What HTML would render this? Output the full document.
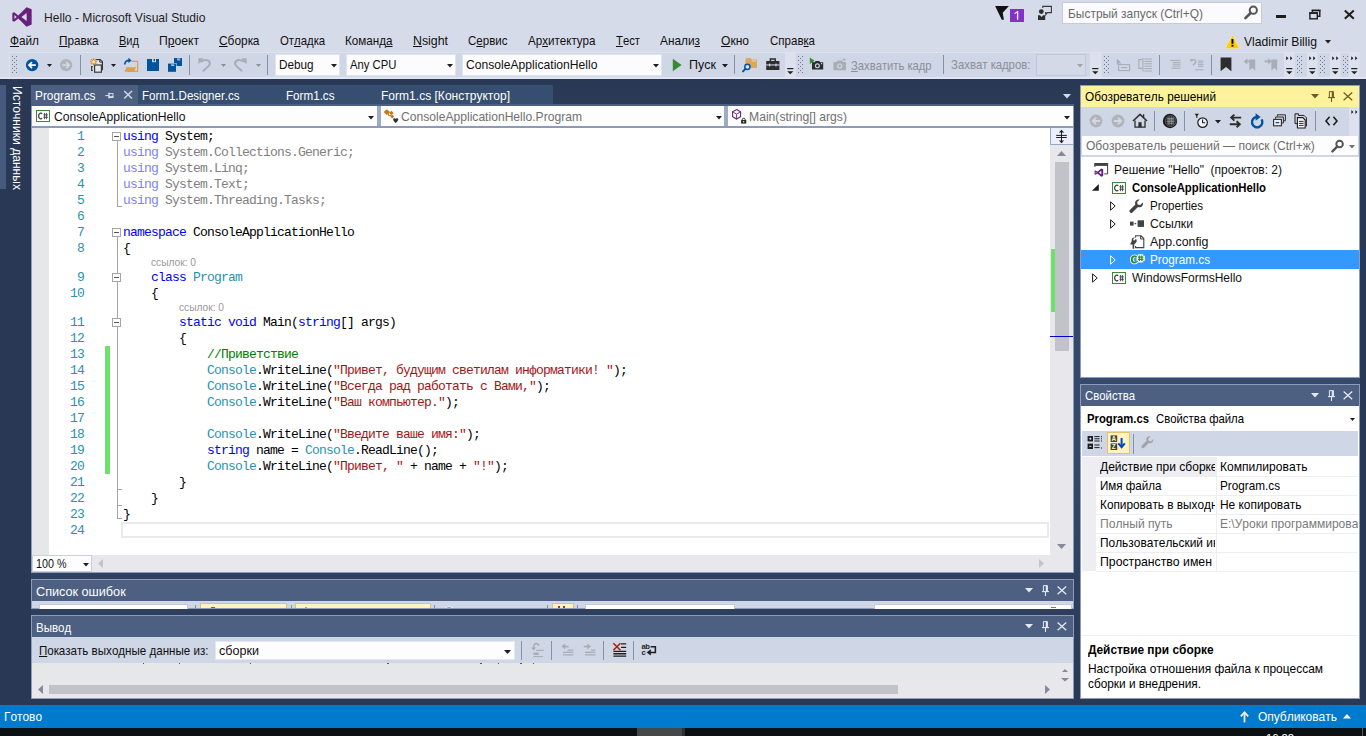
<!DOCTYPE html>
<html><head><meta charset="utf-8">
<style>
*{box-sizing:border-box;margin:0;padding:0}
html,body{width:1366px;height:736px;overflow:hidden;background:#293955}
body{font-family:"Liberation Sans",sans-serif;font-size:12px;color:#1e1e1e}
#root{position:relative;width:1366px;height:736px;overflow:hidden;background:#293955}
.a{position:absolute}
.t{position:absolute;white-space:nowrap;transform-origin:0 50%;font-kerning:none}
.b{font-weight:bold}
.m{font-family:"Liberation Mono",monospace}
u{text-decoration:underline;text-underline-offset:0.5px;text-decoration-thickness:1px}
svg{position:absolute;overflow:visible}
.cl{position:absolute;white-space:pre;font-family:"Liberation Mono",monospace;font-size:13px;letter-spacing:-0.8px;line-height:16px;height:16px;left:123px;color:#000;font-kerning:none}
.ln{position:absolute;white-space:pre;font-family:"Liberation Mono",monospace;font-size:13px;letter-spacing:-0.8px;line-height:16px;height:16px;left:49px;width:35px;text-align:right;color:#2b91af}
.k{color:#0000ff}.y{color:#2b91af}.s{color:#a31515}.c{color:#008000}
.d{color:#808080}.dk{color:#8080ff}
</style></head><body>
<div id="root">
<div class="a" style="left:0px;top:0px;width:1366px;height:79px;background:#d6dbe9;"></div>
<div class="a" style="left:0px;top:77px;width:1366px;height:2px;background:#e1e5f1;"></div>
<svg style="left:12px;top:7px;" width="20" height="20" viewBox="0 0 23.6 23.6"><path fill="#68217a" d="M17.2 0.3 L23.2 2.8 V20.6 L17.2 23.2 L7.4 13.6 L2.6 17.4 L0.4 16.3 V7.2 L2.6 6.1 L7.4 9.9 Z M17.3 7.1 L11.1 11.75 L17.3 16.4 Z M2.9 9.3 V14.2 L5.5 11.75 Z"/></svg>
<span class="t" style="left:44px;top:10.2px;height:16px;line-height:16px;font-size:13.5px;color:#1e1e1e;transform:scaleX(0.8968);">Hello - Microsoft Visual Studio</span>
<svg style="left:995px;top:6px;" width="14" height="14" viewBox="0 0 14 14"><path fill="#111" d="M0.1 0H13.9L7.7 6.7L8.9 13.8H6.8Z"/></svg>
<div class="a" style="left:1010px;top:9px;width:14px;height:13px;background:#8331c7;"></div>
<svg style="left:1014px;top:11px;" width="5" height="9" viewBox="0 0 5 9"><path d="M3.6 0.2V8.8" stroke="#fff" stroke-width="1.3"/><path d="M0.6 2.6L3.4 0.6" stroke="#fff" stroke-width="1.1"/></svg>
<svg style="left:1037px;top:5px;" width="16" height="16" viewBox="0 0 16 16"><path fill="none" stroke="#3a3a3a" stroke-width="1.1" d="M5.8 3V1.4H14.4V7.6H10.4L8.8 9.6V7.6H8"/><circle cx="4.3" cy="6.6" r="2.4" fill="#2d2d2d"/><path fill="#2d2d2d" d="M1 10.2H3L4.6 12L6.2 10.2H8.2V15H1Z"/></svg>
<div class="a" style="left:1062px;top:2px;width:200px;height:22px;background:#fbfbfd;border:1px solid #c5cbdb;"></div>
<span class="t" style="left:1068px;top:6.1px;height:16px;line-height:16px;font-size:13px;color:#6a6a6a;transform:scaleX(0.9191);">Быстрый запуск (Ctrl+Q)</span>
<svg style="left:1244px;top:5px;" width="15" height="15" viewBox="0 0 15 15"><circle cx="9.3" cy="5.2" r="3.6" fill="none" stroke="#555" stroke-width="2"/><path d="M6.6 8 L1.4 13.2" stroke="#555" stroke-width="2.6" stroke-linecap="round"/></svg>
<div class="a" style="left:1276px;top:15px;width:10px;height:3px;background:#1e1e1e;"></div>
<svg style="left:1309px;top:9px;" width="12" height="11" viewBox="0 0 12 11"><path fill="none" stroke="#1e1e1e" stroke-width="1.4" d="M3.4 3V1.4h7.4v5.8h-2.2"/><rect x="0.9" y="4" width="7.4" height="5.8" fill="none" stroke="#1e1e1e" stroke-width="1.4"/><rect x="0.2" y="3.3" width="8.8" height="1.6" fill="#1e1e1e"/><rect x="2.7" y="0.7" width="8.8" height="1.6" fill="#1e1e1e"/></svg>
<svg style="left:1344px;top:10px;" width="11" height="9" viewBox="0 0 11 9"><path d="M0.8 0.4L9.8 8.8M9.8 0.4L0.8 8.8" stroke="#1e1e1e" stroke-width="2"/></svg>
<span class="t" style="left:10px;top:32.8px;height:16px;line-height:16px;font-size:13px;color:#111;transform:scaleX(0.9071);"><u>Ф</u>айл</span>
<span class="t" style="left:59px;top:32.8px;height:16px;line-height:16px;font-size:13px;color:#111;transform:scaleX(0.9051);"><u>П</u>равка</span>
<span class="t" style="left:119px;top:32.8px;height:16px;line-height:16px;font-size:13px;color:#111;transform:scaleX(0.8499);"><u>В</u>ид</span>
<span class="t" style="left:159px;top:32.8px;height:16px;line-height:16px;font-size:13px;color:#111;transform:scaleX(0.9370);">П<u>р</u>оект</span>
<span class="t" style="left:219px;top:32.8px;height:16px;line-height:16px;font-size:13px;color:#111;transform:scaleX(0.9159);"><u>С</u>борка</span>
<span class="t" style="left:280px;top:32.8px;height:16px;line-height:16px;font-size:13px;color:#111;transform:scaleX(0.8754);">От<u>л</u>адка</span>
<span class="t" style="left:345px;top:32.8px;height:16px;line-height:16px;font-size:13px;color:#111;transform:scaleX(0.8965);">Команд<u>а</u></span>
<span class="t" style="left:413px;top:32.8px;height:16px;line-height:16px;font-size:13px;color:#111;transform:scaleX(0.9496);"><u>N</u>sight</span>
<span class="t" style="left:468px;top:32.8px;height:16px;line-height:16px;font-size:13px;color:#111;transform:scaleX(0.8870);">С<u>е</u>рвис</span>
<span class="t" style="left:528px;top:32.8px;height:16px;line-height:16px;font-size:13px;color:#111;transform:scaleX(0.8944);">Ар<u>х</u>итектура</span>
<span class="t" style="left:616px;top:32.8px;height:16px;line-height:16px;font-size:13px;color:#111;transform:scaleX(0.8683);"><u>Т</u>ест</span>
<span class="t" style="left:660px;top:32.8px;height:16px;line-height:16px;font-size:13px;color:#111;transform:scaleX(0.9110);">Анали<u>з</u></span>
<span class="t" style="left:720.5px;top:32.8px;height:16px;line-height:16px;font-size:13px;color:#111;transform:scaleX(0.9261);"><u>О</u>кно</span>
<span class="t" style="left:769.5px;top:32.8px;height:16px;line-height:16px;font-size:13px;color:#111;transform:scaleX(0.8872);">Справ<u>к</u>а</span>
<svg style="left:1224.6px;top:34px;" width="15" height="15" viewBox="0 0 15 15"><path d="M7.4 0.8L14.4 14.6H0.4Z" fill="#ffcc00" stroke="#f7e9a8" stroke-width="0.7" stroke-linejoin="round"/><rect x="6.5" y="5" width="1.9" height="4.8" fill="#000"/><rect x="6.5" y="10.8" width="1.9" height="1.8" fill="#000"/></svg>
<span class="t" style="left:1244px;top:34px;height:16px;line-height:16px;font-size:13px;color:#111;transform:scaleX(0.9355);">Vladimir Billig</span>
<svg style="left:1325px;top:40px;" width="6" height="3.5" viewBox="0 0 6 3.5"><path d="M0 0H6L3.0 3.5Z" fill="#1e1e1e"/></svg>
<div class="a" style="left:9px;top:52px;width:787px;height:25px;background:#cfd6e5;border-left:1px solid #dde2ef;border-top:1px solid #dde2ef;"></div>
<div class="a" style="left:796px;top:52px;width:305px;height:25px;background:#cfd6e5;border-top:1px solid #dde2ef;"></div>
<div class="a" style="left:1102px;top:52px;width:193px;height:25px;background:#cfd6e5;border-top:1px solid #dde2ef;"></div>
<div class="a" style="left:1295px;top:52px;width:23px;height:25px;background:#cfd6e5;border-top:1px solid #dde2ef;"></div>
<div class="a" style="left:1318px;top:52px;width:23px;height:25px;background:#cfd6e5;border-top:1px solid #dde2ef;"></div>
<div class="a" style="left:1341px;top:52px;width:19px;height:25px;background:#cfd6e5;border-top:1px solid #dde2ef;"></div>
<svg style="left:12px;top:56px;" width="5" height="18" viewBox="0 0 5 18"><g fill="#6d7890"><rect x="0" y="0" width="1" height="1"/><rect x="4" y="0" width="1" height="1"/><rect x="2" y="2" width="1" height="1"/><rect x="0" y="4" width="1" height="1"/><rect x="4" y="4" width="1" height="1"/><rect x="2" y="6" width="1" height="1"/><rect x="0" y="8" width="1" height="1"/><rect x="4" y="8" width="1" height="1"/><rect x="2" y="10" width="1" height="1"/><rect x="0" y="12" width="1" height="1"/><rect x="4" y="12" width="1" height="1"/><rect x="2" y="14" width="1" height="1"/><rect x="0" y="16" width="1" height="1"/><rect x="4" y="16" width="1" height="1"/></g></svg>
<svg style="left:25px;top:58px;" width="14" height="14" viewBox="0 0 14 14"><circle cx="7.1" cy="7.1" r="6.2" fill="#00539c"/><path d="M10.8 7.1H4.4M7 4.1L4 7.1L7 10.1" fill="none" stroke="#fff" stroke-width="1.7"/></svg>
<svg style="left:46.5px;top:64px;" width="5" height="3.0" viewBox="0 0 5 3.0"><path d="M0 0H5L2.5 3.0Z" fill="#1e1e1e"/></svg>
<svg style="left:59px;top:58px;" width="14" height="14" viewBox="0 0 14 14"><circle cx="7.1" cy="7.1" r="6.2" fill="#b1b4bb"/><path d="M3.4 7.1H9.8M7.2 4.1L10.2 7.1L7.2 10.1" fill="none" stroke="#d4d8e2" stroke-width="1.7"/></svg>
<div class="a" style="left:80px;top:55px;width:1px;height:20px;background:#8591ab;"></div>
<svg style="left:90px;top:58px;" width="13" height="15" viewBox="0 0 13 15"><path d="M5.6 1.6H10.2L12.4 3.8V11.6H11" fill="#e8eaf2" stroke="#3a3a3a" stroke-width="1.2"/><path d="M9.8 1.6V4.2H12.4" fill="none" stroke="#3a3a3a" stroke-width="1"/><rect x="4.6" y="7" width="6.8" height="7.2" fill="#e8eaf2" stroke="#3a3a3a" stroke-width="1.2"/><path d="M2.8 8.6H1.6V12.4H2.8" fill="none" stroke="#3a3a3a" stroke-width="1.1"/><g stroke="#d98a1f" stroke-width="1.1"><path d="M3.6 0.2V7.2M0.1 3.7H7.1M1.1 1.2L6.1 6.2M6.1 1.2L1.1 6.2"/></g><circle cx="3.6" cy="3.7" r="1.5" fill="#fbe2b4"/></svg>
<svg style="left:111px;top:64px;" width="5" height="3.0" viewBox="0 0 5 3.0"><path d="M0 0H5L2.5 3.0Z" fill="#1e1e1e"/></svg>
<svg style="left:124px;top:58px;" width="15" height="15" viewBox="0 0 15 15"><path d="M7.4 3.4H13.6V13.4H4" fill="none" stroke="#dca04c" stroke-width="1.2"/><path d="M0.4 13.8L2.6 9.2H12.2L10 13.8Z" fill="#dca04c"/><path d="M0.8 6.6C0.8 3.6 2.6 2.4 5.2 2.4" fill="none" stroke="#00539c" stroke-width="1.7"/><path d="M4.4 -0.2L7.6 2.4L4.4 5Z" fill="#00539c"/></svg>
<svg style="left:147px;top:59px;" width="12" height="12" viewBox="0 0 12 12"><path d="M0 0H12V12H0Z" fill="#00539c"/><rect x="5" y="0" width="4" height="3.2" fill="#cfd6e5"/><rect x="6.6" y="0" width="1.4" height="2.2" fill="#00539c"/></svg>
<svg style="left:167px;top:58px;" width="16" height="14" viewBox="0 0 16 14"><path d="M7 0H15V8H7Z" fill="#00539c"/><rect x="10.4" y="0" width="2.8" height="2.4" fill="#cfd6e5"/><rect x="11.6" y="0" width="1" height="1.6" fill="#00539c"/><path d="M0.4 5H9.6V14.4H0.4Z" fill="#cfd6e5"/><path d="M1 5.6H9V13.8H1Z" fill="#00539c"/><rect x="4.4" y="5.6" width="2.8" height="2.4" fill="#cfd6e5"/><rect x="5.6" y="5.6" width="1" height="1.6" fill="#00539c"/></svg>
<div class="a" style="left:189px;top:55px;width:1px;height:20px;background:#8591ab;"></div>
<svg style="left:198px;top:58px;" width="14" height="14" viewBox="0 0 14 14"><path d="M2.6 3.6C8 0.4 12.4 2.2 11.8 6C11.4 8.4 8 10 5 13.4" fill="none" stroke="#a9adb6" stroke-width="2"/><path d="M0.4 0.2H5.4L3.4 3.4L0.4 6Z" fill="#a9adb6"/></svg>
<svg style="left:220.5px;top:64px;" width="5" height="3.0" viewBox="0 0 5 3.0"><path d="M0 0H5L2.5 3.0Z" fill="#8e9096"/></svg>
<svg style="left:233px;top:58px;" width="14" height="14" viewBox="0 0 14 14"><path d="M11.4 3.6C6 0.4 1.6 2.2 2.2 6C2.6 8.4 6 10 9 13.4" fill="none" stroke="#a9adb6" stroke-width="2"/><path d="M13.6 0.2H8.6L10.6 3.4L13.6 6Z" fill="#a9adb6"/></svg>
<svg style="left:255.5px;top:64px;" width="5" height="3.0" viewBox="0 0 5 3.0"><path d="M0 0H5L2.5 3.0Z" fill="#8e9096"/></svg>
<div class="a" style="left:267px;top:55px;width:1px;height:20px;background:#8591ab;"></div>
<div class="a" style="left:275px;top:54px;width:65px;height:22px;background:#fcfcfc;border:1px solid #e0e5f0;"></div><svg style="left:330.5px;top:63.5px;" width="6" height="3.5" viewBox="0 0 6 3.5"><path d="M0 0H6L3.0 3.5Z" fill="#1e1e1e"/></svg>
<span class="t" style="left:279px;top:57px;height:16px;line-height:16px;font-size:13px;color:#111;transform:scaleX(0.9005);">Debug</span>
<div class="a" style="left:346px;top:54px;width:110px;height:22px;background:#fcfcfc;border:1px solid #e0e5f0;"></div><svg style="left:446.5px;top:63.5px;" width="6" height="3.5" viewBox="0 0 6 3.5"><path d="M0 0H6L3.0 3.5Z" fill="#1e1e1e"/></svg>
<span class="t" style="left:350px;top:57px;height:16px;line-height:16px;font-size:13px;color:#111;transform:scaleX(0.8697);">Any CPU</span>
<div class="a" style="left:462px;top:54px;width:200px;height:22px;background:#fcfcfc;border:1px solid #e0e5f0;"></div><svg style="left:652.5px;top:63.5px;" width="6" height="3.5" viewBox="0 0 6 3.5"><path d="M0 0H6L3.0 3.5Z" fill="#1e1e1e"/></svg>
<span class="t" style="left:465.5px;top:57px;height:16px;line-height:16px;font-size:13px;color:#111;transform:scaleX(0.9331);">ConsoleApplicationHello</span>
<svg style="left:672px;top:58px;" width="11" height="14" viewBox="0 0 11 14"><path d="M0.8 0.8L9.6 7L0.8 13.2Z" fill="#388a34"/></svg>
<span class="t" style="left:689px;top:57px;height:16px;line-height:16px;font-size:13px;color:#111;transform:scaleX(0.9632);">Пуск</span>
<svg style="left:721.5px;top:64px;" width="6" height="3.5" viewBox="0 0 6 3.5"><path d="M0 0H6L3.0 3.5Z" fill="#1e1e1e"/></svg>
<div class="a" style="left:734px;top:55px;width:1px;height:19px;background:#8591ab;"></div>
<svg style="left:742px;top:56px;" width="17" height="17" viewBox="0 0 17 17"><path d="M3.4 3.4L4.6 2H8.4L9.6 3.4H15V12H3.4Z" fill="#dca85c"/><rect x="9.8" y="4.4" width="4.2" height="1" fill="#f3dcb4"/><circle cx="5.4" cy="10.8" r="2.6" fill="#dfe4f0" stroke="#00539c" stroke-width="1.5"/><path d="M3.4 12.8L1 15.4" stroke="#00539c" stroke-width="1.9" stroke-linecap="round"/></svg>
<svg style="left:766px;top:58px;" width="14" height="13" viewBox="0 0 14 13"><path d="M4.4 3V1H9.2V3" fill="none" stroke="#2d2d2d" stroke-width="1.5"/><rect x="0.2" y="3" width="13.2" height="9" fill="#2d2d2d"/><rect x="0.2" y="6.4" width="13.2" height="1.1" fill="#cfd6e5"/><rect x="3" y="5.6" width="1.2" height="2.8" fill="#cfd6e5"/><rect x="9.4" y="5.6" width="1.2" height="2.8" fill="#cfd6e5"/></svg>
<svg style="left:784.5px;top:53px;" width="10" height="24" viewBox="0 0 10 24"><rect x="0" y="0" width="10.6" height="24" fill="#dde1ee"/><rect x="2.2" y="15" width="6.2" height="1.2" fill="#1e1e1e"/><path d="M2.2 18.2h6.2l-3.1 3z" fill="#1e1e1e"/></svg>
<svg style="left:798px;top:56px;" width="5" height="18" viewBox="0 0 5 18"><g fill="#6d7890"><rect x="0" y="0" width="1" height="1"/><rect x="4" y="0" width="1" height="1"/><rect x="2" y="2" width="1" height="1"/><rect x="0" y="4" width="1" height="1"/><rect x="4" y="4" width="1" height="1"/><rect x="2" y="6" width="1" height="1"/><rect x="0" y="8" width="1" height="1"/><rect x="4" y="8" width="1" height="1"/><rect x="2" y="10" width="1" height="1"/><rect x="0" y="12" width="1" height="1"/><rect x="4" y="12" width="1" height="1"/><rect x="2" y="14" width="1" height="1"/><rect x="0" y="16" width="1" height="1"/><rect x="4" y="16" width="1" height="1"/></g></svg>
<svg style="left:807px;top:57px;" width="17" height="15" viewBox="0 0 17 15"><path d="M2.8 0.6L7.6 3.8L2.8 7Z" fill="#388a34"/><path d="M5 5.2H7.6L8.6 4H12.2L13.2 5.2H16.2V12.6H5Z" fill="#2d2d2d"/><circle cx="10.4" cy="8.8" r="2.5" fill="#cfd6e5"/><circle cx="10.4" cy="8.8" r="1.4" fill="#2d2d2d"/><rect x="14" y="6" width="1.2" height="1.2" fill="#cfd6e5"/></svg>
<svg style="left:833px;top:58px;" width="15" height="14" viewBox="0 0 15 14"><path d="M0.4 4H3.4L4.6 2.4H9L10.2 4H13V12.2H0.4Z" fill="#a9adb6"/><circle cx="6.7" cy="8" r="2.6" fill="#cfd6e5"/><circle cx="6.7" cy="8" r="1.4" fill="#a9adb6"/><path d="M11 0.2V3M9.6 1.6H12.6" stroke="#a9adb6" stroke-width="0.9"/></svg>
<span class="t" style="left:851px;top:57.5px;height:16px;line-height:16px;font-size:13px;color:#8b8f98;transform:scaleX(0.8654);"><u>З</u>ахватить кадр</span>
<div class="a" style="left:943px;top:55px;width:1px;height:19px;background:#8591ab;"></div>
<span class="t" style="left:951px;top:57px;height:16px;line-height:16px;font-size:13px;color:#8b8f98;transform:scaleX(0.8757);">Захват ка<u>д</u>ров:</span>
<div class="a" style="left:1036px;top:54px;width:50px;height:22px;background:#d3d9e7;border:1px solid #c0c8db;"></div><svg style="left:1076.5px;top:63.5px;" width="6" height="3.5" viewBox="0 0 6 3.5"><path d="M0 0H6L3.0 3.5Z" fill="#a2a4a5"/></svg>
<svg style="left:1090.4px;top:53px;" width="10" height="24" viewBox="0 0 10 24"><rect x="0" y="0" width="11.6" height="24" fill="#dde1ee"/><rect x="2.2" y="15" width="6.2" height="1.2" fill="#1e1e1e"/><path d="M2.2 18.2h6.2l-3.1 3z" fill="#1e1e1e"/></svg>
<svg style="left:1104px;top:56px;" width="5" height="18" viewBox="0 0 5 18"><g fill="#6d7890"><rect x="0" y="0" width="1" height="1"/><rect x="4" y="0" width="1" height="1"/><rect x="2" y="2" width="1" height="1"/><rect x="0" y="4" width="1" height="1"/><rect x="4" y="4" width="1" height="1"/><rect x="2" y="6" width="1" height="1"/><rect x="0" y="8" width="1" height="1"/><rect x="4" y="8" width="1" height="1"/><rect x="2" y="10" width="1" height="1"/><rect x="0" y="12" width="1" height="1"/><rect x="4" y="12" width="1" height="1"/><rect x="2" y="14" width="1" height="1"/><rect x="0" y="16" width="1" height="1"/><rect x="4" y="16" width="1" height="1"/></g></svg>
<svg style="left:1116px;top:58px;" width="15" height="14" viewBox="0 0 15 14"><path d="M0.8 0.4V7L2.6 5.4H5.6Z" fill="#a9adb6"/><rect x="2.6" y="6.6" width="11" height="6" fill="none" stroke="#a9adb6" stroke-width="1.1"/><path d="M5 9.6H11.4" stroke="#a9adb6" stroke-width="1.1"/></svg>
<svg style="left:1138px;top:57px;" width="15" height="16" viewBox="0 0 15 16"><path d="M4 2.6H0.9V11.4H4" fill="none" stroke="#a9adb6" stroke-width="1.1"/><path d="M4.9 1V14.6" stroke="#a9adb6" stroke-width="1.1"/><path d="M6.4 2H14M6.4 4.4H14M6.4 6.8H14M6.4 9.2H14M6.4 11.6H14M6.4 14H14" stroke="#a9adb6" stroke-width="1"/></svg>
<div class="a" style="left:1159px;top:55px;width:1px;height:20px;background:#8591ab;"></div>
<svg style="left:1169px;top:59px;" width="13" height="12" viewBox="0 0 13 12"><path d="M1 1.4H11.4M3.6 3.4H11.4M3.6 5.2H11.4M3.6 7H11.4M2.8 9.2H11.4" stroke="#a9adb6" stroke-width="1"/></svg>
<svg style="left:1190px;top:58px;" width="15" height="14" viewBox="0 0 15 14"><path d="M1.4 3.4C2.6 0.6 6.4 1.4 5.6 4.2C5.2 5.6 4 6 3 7.4" fill="none" stroke="#a9adb6" stroke-width="1.4"/><path d="M0.2 0.8L3.2 1.4L0.6 4Z" fill="#a9adb6"/><path d="M8 3H13.4M8 4.8H13.4M8 6.6H13.4M8 8.4H13.4M5 11.8H13.4" stroke="#a9adb6" stroke-width="1"/></svg>
<div class="a" style="left:1211px;top:55px;width:1px;height:20px;background:#8591ab;"></div>
<svg style="left:1220px;top:57px;" width="12" height="15" viewBox="0 0 12 15"><path d="M0.6 0.6H11.4V14.2L6 10L0.6 14.2Z" fill="#2d2d30"/></svg>
<svg style="left:1243px;top:57px;" width="13" height="15" viewBox="0 0 13 15"><path d="M6.4 2.4H12.2V13.6L9.3 11L6.4 13.6Z" fill="#a9adb6"/><path d="M8 4.4H2.4" stroke="#a9adb6" stroke-width="1.9"/><path d="M4.4 1.2V7.6L0.6 4.4Z" fill="#a9adb6"/></svg>
<svg style="left:1264px;top:57px;" width="14" height="15" viewBox="0 0 14 15"><path d="M7.4 2.4H13.2V13.6L10.3 11L7.4 13.6Z" fill="#a9adb6"/><path d="M0.6 4.4H5" stroke="#a9adb6" stroke-width="1.9"/><path d="M4.2 1.2V7.6L8 4.4Z" fill="#a9adb6"/></svg>
<svg style="left:1284px;top:53px;" width="10" height="24" viewBox="0 0 10 24"><rect x="0" y="0" width="10.6" height="24" fill="#dde1ee"/><path d="M2.2 3.2V7.2L4.4 5.2Z M6.2 3.2V7.2L8.4 5.2Z" fill="#1e1e1e"/><rect x="2.2" y="15" width="6.2" height="1.2" fill="#1e1e1e"/><path d="M2.2 18.2h6.2l-3.1 3z" fill="#1e1e1e"/></svg>
<svg style="left:1297px;top:56px;" width="5" height="18" viewBox="0 0 5 18"><g fill="#6d7890"><rect x="0" y="0" width="1" height="1"/><rect x="4" y="0" width="1" height="1"/><rect x="2" y="2" width="1" height="1"/><rect x="0" y="4" width="1" height="1"/><rect x="4" y="4" width="1" height="1"/><rect x="2" y="6" width="1" height="1"/><rect x="0" y="8" width="1" height="1"/><rect x="4" y="8" width="1" height="1"/><rect x="2" y="10" width="1" height="1"/><rect x="0" y="12" width="1" height="1"/><rect x="4" y="12" width="1" height="1"/><rect x="2" y="14" width="1" height="1"/><rect x="0" y="16" width="1" height="1"/><rect x="4" y="16" width="1" height="1"/></g></svg>
<svg style="left:1307px;top:53px;" width="10" height="24" viewBox="0 0 10 24"><rect x="0" y="0" width="10.6" height="24" fill="#dde1ee"/><path d="M2.2 3.2V7.2L4.4 5.2Z M6.2 3.2V7.2L8.4 5.2Z" fill="#1e1e1e"/><rect x="2.2" y="15" width="6.2" height="1.2" fill="#1e1e1e"/><path d="M2.2 18.2h6.2l-3.1 3z" fill="#1e1e1e"/></svg>
<svg style="left:1320px;top:56px;" width="5" height="18" viewBox="0 0 5 18"><g fill="#6d7890"><rect x="0" y="0" width="1" height="1"/><rect x="4" y="0" width="1" height="1"/><rect x="2" y="2" width="1" height="1"/><rect x="0" y="4" width="1" height="1"/><rect x="4" y="4" width="1" height="1"/><rect x="2" y="6" width="1" height="1"/><rect x="0" y="8" width="1" height="1"/><rect x="4" y="8" width="1" height="1"/><rect x="2" y="10" width="1" height="1"/><rect x="0" y="12" width="1" height="1"/><rect x="4" y="12" width="1" height="1"/><rect x="2" y="14" width="1" height="1"/><rect x="0" y="16" width="1" height="1"/><rect x="4" y="16" width="1" height="1"/></g></svg>
<svg style="left:1330px;top:53px;" width="10" height="24" viewBox="0 0 10 24"><rect x="0" y="0" width="10.6" height="24" fill="#dde1ee"/><path d="M2.2 3.2V7.2L4.4 5.2Z M6.2 3.2V7.2L8.4 5.2Z" fill="#1e1e1e"/><rect x="2.2" y="15" width="6.2" height="1.2" fill="#1e1e1e"/><path d="M2.2 18.2h6.2l-3.1 3z" fill="#1e1e1e"/></svg>
<svg style="left:1343px;top:56px;" width="5" height="18" viewBox="0 0 5 18"><g fill="#6d7890"><rect x="0" y="0" width="1" height="1"/><rect x="4" y="0" width="1" height="1"/><rect x="2" y="2" width="1" height="1"/><rect x="0" y="4" width="1" height="1"/><rect x="4" y="4" width="1" height="1"/><rect x="2" y="6" width="1" height="1"/><rect x="0" y="8" width="1" height="1"/><rect x="4" y="8" width="1" height="1"/><rect x="2" y="10" width="1" height="1"/><rect x="0" y="12" width="1" height="1"/><rect x="4" y="12" width="1" height="1"/><rect x="2" y="14" width="1" height="1"/><rect x="0" y="16" width="1" height="1"/><rect x="4" y="16" width="1" height="1"/></g></svg>
<svg style="left:1349px;top:53px;" width="10" height="24" viewBox="0 0 10 24"><rect x="0" y="0" width="10.6" height="24" fill="#dde1ee"/><path d="M2.2 3.2V7.2L4.4 5.2Z M6.2 3.2V7.2L8.4 5.2Z" fill="#1e1e1e"/><rect x="2.2" y="15" width="6.2" height="1.2" fill="#1e1e1e"/><path d="M2.2 18.2h6.2l-3.1 3z" fill="#1e1e1e"/></svg>
<div class="a" style="left:31px;top:79px;width:1329px;height:626px;background:linear-gradient(to bottom,#293955 0%,#35496a 40%,#35496a 60%,#293955 100%);"></div>
<div class="a" style="left:0px;top:85px;width:6px;height:104px;background:#465a7d;"></div>
<span class="t" style="left:17px;top:129.5px;height:16px;line-height:16px;font-size:13px;color:#fff;transform-origin:0 0;transform:rotate(90deg) scale(0.93,1);left:25px;top:85.5px;">Источники данных</span>
<div class="a" style="left:31px;top:85px;width:107px;height:21px;background:#4d6082;"></div>
<div class="a" style="left:138px;top:85px;width:415px;height:19px;background:#364e6f;"></div>
<div class="a" style="left:31px;top:104px;width:1043px;height:2px;background:#4d6082;"></div>
<span class="t" style="left:35px;top:88px;height:16px;line-height:16px;font-size:13px;color:#fff;transform:scaleX(0.9102);">Program.cs</span>
<svg style="left:105px;top:91px;" width="10" height="10" viewBox="0 0 10 10"><g stroke="#dfe3ee"><path d="M0.4 4.6H3.6" stroke-width="1"/><path d="M4 1.6V7.6" stroke-width="1"/><rect x="4" y="2.6" width="4" height="4" fill="none" stroke-width="0.9"/><path d="M4 5.8H8.4" stroke-width="1.3"/></g></svg>
<svg style="left:123px;top:90.4px;" width="10" height="10" viewBox="0 0 10 10"><path d="M1.2 1L9 8.6M9 1L1.2 8.6" stroke="#d3d9e7" stroke-width="1.4"/></svg>
<span class="t" style="left:142px;top:88px;height:16px;line-height:16px;font-size:13px;color:#fff;transform:scaleX(0.8879);">Form1.Designer.cs</span>
<span class="t" style="left:286px;top:88px;height:16px;line-height:16px;font-size:13px;color:#fff;transform:scaleX(0.8953);">Form1.cs</span>
<span class="t" style="left:381px;top:88px;height:16px;line-height:16px;font-size:13px;color:#fff;transform:scaleX(0.9262);">Form1.cs [Конструктор]</span>
<svg style="left:1063px;top:94px;" width="8" height="4.5" viewBox="0 0 8 4.5"><path d="M0 0H8L4.0 4.5Z" fill="#d6dbe9"/></svg>
<div class="a" style="left:31px;top:106px;width:1043px;height:467px;background:#8e9bbc;"></div>
<div class="a" style="left:32px;top:106px;width:1041px;height:22px;background:#8f9bb6;"></div>
<div class="a" style="left:32px;top:106px;width:345px;height:20px;background:#fdfdfd;"></div>
<div class="a" style="left:380.6px;top:106px;width:344px;height:20px;background:#fdfdfd;"></div>
<div class="a" style="left:728px;top:106px;width:344.6px;height:20px;background:#fdfdfd;"></div>
<div class="a" style="left:377px;top:106px;width:3.6px;height:20px;background:#9eabc4;"></div>
<div class="a" style="left:724.4px;top:106px;width:3.6px;height:20px;background:#9eabc4;"></div>
<svg style="left:36px;top:110px;" width="14" height="12" viewBox="0 0 14 12"><rect x="0.5" y="0.5" width="13" height="11" fill="#fff" stroke="#388a34" stroke-width="1"/><path d="M6.2 3.9C5.2 2.6 2.6 3.2 2.6 6C2.6 8.8 5.2 9.4 6.2 8.1" fill="none" stroke="#424242" stroke-width="1.25"/><path d="M8.6 3V9.2M10.6 3V9.2M7.4 4.9H11.8M7.4 7.3H11.8" stroke="#424242" stroke-width="0.95"/></svg>
<span class="t" style="left:53.5px;top:109px;height:16px;line-height:16px;font-size:13px;color:#111;transform:scaleX(0.9331);">ConsoleApplicationHello</span>
<svg style="left:368px;top:115.5px;" width="6" height="3.5" viewBox="0 0 6 3.5"><path d="M0 0H6L3.0 3.5Z" fill="#1e1e1e"/></svg>
<svg style="left:384px;top:109px;" width="15" height="15" viewBox="0 0 15 15"><g fill="#c27d1a"><path d="M2.8 0.2L6.1 3.1L2.8 6L-0.5 3.1Z"/><path d="M7.4 1.8L9.6 4L7.4 6.2L5.2 4Z"/><path d="M8.2 5.6L10.2 7.6L8.2 9.6L6.2 7.6Z"/></g><path d="M4.6 4V6.6H7" fill="none" stroke="#c27d1a" stroke-width="1"/><path d="M9.2 10.4C9.2 8.9 11.4 8.9 11.7 10.1C12 8.9 14.2 8.9 14.2 10.4C14.2 11.8 11.7 13.9 11.7 13.9C11.7 13.9 9.2 11.8 9.2 10.4Z" fill="#2d2d2d"/></svg>
<span class="t" style="left:401px;top:109px;height:16px;line-height:16px;font-size:13px;color:#717171;transform:scaleX(0.9311);">ConsoleApplicationHello.Program</span>
<svg style="left:716px;top:115.5px;" width="6" height="3.5" viewBox="0 0 6 3.5"><path d="M0 0H6L3.0 3.5Z" fill="#1e1e1e"/></svg>
<svg style="left:732px;top:108.6px;" width="15" height="15" viewBox="0 0 15 15"><path d="M4.6 0.6L8.6 2.8V7.7L4.6 10L0.6 7.7V2.8Z" fill="#fff" stroke="#68217a" stroke-width="1.1"/><path d="M0.6 2.8L4.6 5.1L8.6 2.8M4.6 5.1V10" fill="none" stroke="#68217a" stroke-width="0.9"/><rect x="9.1" y="11" width="5.2" height="3.6" fill="#2d2d2d"/><path d="M10.3 11V10.2C10.3 9 13.1 9 13.1 10.2V11" fill="none" stroke="#2d2d2d" stroke-width="1"/><rect x="11.2" y="12" width="1" height="1.4" fill="#fdfdfd"/></svg>
<span class="t" style="left:749px;top:109px;height:16px;line-height:16px;font-size:13px;color:#717171;transform:scaleX(0.9356);">Main(string[] args)</span>
<svg style="left:1063.5px;top:115.5px;" width="6" height="3.5" viewBox="0 0 6 3.5"><path d="M0 0H6L3.0 3.5Z" fill="#1e1e1e"/></svg>
<div class="a" style="left:32px;top:128px;width:1018px;height:427px;background:#fff;"></div>
<div class="a" style="left:32px;top:128px;width:17px;height:427px;background:#e6e7e8;"></div>
<div class="a" style="left:104.6px;top:346px;width:5px;height:128px;background:#6ce26c;"></div>
<div class="a" style="left:121px;top:522px;width:927.5px;height:16px;border:2px solid #eaeaec;"></div>
<div class="a" style="left:117px;top:141px;width:1px;height:66px;background:#a5a5a5;"></div>
<div class="a" style="left:117px;top:206px;width:5px;height:1px;background:#a5a5a5;"></div>
<div class="a" style="left:117px;top:237px;width:1px;height:282px;background:#a5a5a5;"></div>
<div class="a" style="left:117px;top:489px;width:5px;height:1px;background:#a5a5a5;"></div>
<div class="a" style="left:117px;top:505px;width:5px;height:1px;background:#a5a5a5;"></div>
<div class="a" style="left:117px;top:518px;width:5px;height:1px;background:#a5a5a5;"></div>
<svg style="left:112px;top:132px;" width="9" height="9" viewBox="0 0 9 9"><rect x="0.5" y="0.5" width="8" height="8" fill="#fff" stroke="#a5a5a5"/><path d="M2 4.5H7" stroke="#555" stroke-width="1"/></svg>
<svg style="left:112px;top:228px;" width="9" height="9" viewBox="0 0 9 9"><rect x="0.5" y="0.5" width="8" height="8" fill="#fff" stroke="#a5a5a5"/><path d="M2 4.5H7" stroke="#555" stroke-width="1"/></svg>
<svg style="left:112px;top:273px;" width="9" height="9" viewBox="0 0 9 9"><rect x="0.5" y="0.5" width="8" height="8" fill="#fff" stroke="#a5a5a5"/><path d="M2 4.5H7" stroke="#555" stroke-width="1"/></svg>
<svg style="left:112px;top:318px;" width="9" height="9" viewBox="0 0 9 9"><rect x="0.5" y="0.5" width="8" height="8" fill="#fff" stroke="#a5a5a5"/><path d="M2 4.5H7" stroke="#555" stroke-width="1"/></svg>
<div class="ln" style="top:129px">1</div>
<div class="cl" style="top:129px"><span class="k">using</span> System;</div>
<div class="ln" style="top:145px">2</div>
<div class="cl" style="top:145px"><span class="dk">using</span><span class="d"> System.Collections.Generic;</span></div>
<div class="ln" style="top:161px">3</div>
<div class="cl" style="top:161px"><span class="dk">using</span><span class="d"> System.Linq;</span></div>
<div class="ln" style="top:177px">4</div>
<div class="cl" style="top:177px"><span class="dk">using</span><span class="d"> System.Text;</span></div>
<div class="ln" style="top:193px">5</div>
<div class="cl" style="top:193px"><span class="dk">using</span><span class="d"> System.Threading.Tasks;</span></div>
<div class="ln" style="top:209px">6</div>
<div class="ln" style="top:225px">7</div>
<div class="cl" style="top:225px"><span class="k">namespace</span> ConsoleApplicationHello</div>
<div class="ln" style="top:241px">8</div>
<div class="cl" style="top:241px">{</div>
<div class="ln" style="top:270px">9</div>
<div class="cl" style="top:270px">    <span class="k">class</span> <span class="y">Program</span></div>
<div class="ln" style="top:286px">10</div>
<div class="cl" style="top:286px">    {</div>
<div class="ln" style="top:315px">11</div>
<div class="cl" style="top:315px">        <span class="k">static</span> <span class="k">void</span> Main(<span class="k">string</span>[] args)</div>
<div class="ln" style="top:331px">12</div>
<div class="cl" style="top:331px">        {</div>
<div class="ln" style="top:347px">13</div>
<div class="cl" style="top:347px">            <span class="c">//Приветствие</span></div>
<div class="ln" style="top:363px">14</div>
<div class="cl" style="top:363px">            <span class="y">Console</span>.WriteLine(<span class="s">"Привет, будущим светилам информатики! "</span>);</div>
<div class="ln" style="top:379px">15</div>
<div class="cl" style="top:379px">            <span class="y">Console</span>.WriteLine(<span class="s">"Всегда рад работать с Вами,"</span>);</div>
<div class="ln" style="top:395px">16</div>
<div class="cl" style="top:395px">            <span class="y">Console</span>.WriteLine(<span class="s">"Ваш компьютер."</span>);</div>
<div class="ln" style="top:411px">17</div>
<div class="ln" style="top:427px">18</div>
<div class="cl" style="top:427px">            <span class="y">Console</span>.WriteLine(<span class="s">"Введите ваше имя:"</span>);</div>
<div class="ln" style="top:443px">19</div>
<div class="cl" style="top:443px">            <span class="k">string</span> name = <span class="y">Console</span>.ReadLine();</div>
<div class="ln" style="top:459px">20</div>
<div class="cl" style="top:459px">            <span class="y">Console</span>.WriteLine(<span class="s">"Привет, "</span> + name + <span class="s">"!"</span>);</div>
<div class="ln" style="top:475px">21</div>
<div class="cl" style="top:475px">        }</div>
<div class="ln" style="top:491px">22</div>
<div class="cl" style="top:491px">    }</div>
<div class="ln" style="top:507px">23</div>
<div class="cl" style="top:507px">}</div>
<div class="ln" style="top:523px">24</div>
<span class="t" style="left:151px;top:254px;height:16px;line-height:16px;font-size:10.5px;color:#999;transform:scaleX(0.9723);">ссылок: 0</span>
<span class="t" style="left:179px;top:299px;height:16px;line-height:16px;font-size:10.5px;color:#999;transform:scaleX(0.9723);">ссылок: 0</span>
<div class="a" style="left:1050px;top:128px;width:23px;height:427px;background:#e8e8ec;"></div>
<div class="a" style="left:1050px;top:128px;width:23px;height:16.5px;background:#eaeffb;border:1px solid #9aa7c6;border-top:none;border-right:none;"></div>
<svg style="left:1056px;top:130px;" width="11" height="13" viewBox="0 0 11 13"><path d="M5.5 0.6V12.4" stroke="#1e1e1e" stroke-width="1"/><path d="M3.6 2.6L5.5 0.6L7.4 2.6M3.6 10.4L5.5 12.4L7.4 10.4" fill="none" stroke="#1e1e1e" stroke-width="1.1"/><path d="M0.2 5.4H10.8M0.2 7.5H10.8" stroke="#1e1e1e" stroke-width="1"/></svg>
<svg style="left:1057px;top:151px;" width="9" height="5" viewBox="0 0 9 5"><path d="M0 5L4.5 0L9 5Z" fill="#868999"/></svg>
<div class="a" style="left:1054.5px;top:162px;width:14.5px;height:189px;background:#c2c3c9;"></div>
<div class="a" style="left:1050.5px;top:249px;width:4.5px;height:63px;background:#6ce26c;"></div>
<div class="a" style="left:1050px;top:335.5px;width:23px;height:1.6px;background:#0000cd;"></div>
<svg style="left:1057px;top:544px;" width="9" height="5" viewBox="0 0 9 5"><path d="M0 0L4.5 5L9 0Z" fill="#868999"/></svg>
<div class="a" style="left:32px;top:555px;width:1041px;height:17px;background:#e8e8ec;"></div>
<div class="a" style="left:32px;top:555px;width:60px;height:17px;background:#fdfdfd;border:1px solid #c9d0e1;"></div>
<span class="t" style="left:35.5px;top:556px;height:16px;line-height:16px;font-size:13px;color:#111;transform:scaleX(0.8271);">100 %</span>
<svg style="left:82.5px;top:563px;" width="6" height="3.5" viewBox="0 0 6 3.5"><path d="M0 0H6L3.0 3.5Z" fill="#1e1e1e"/></svg>
<svg style="left:98px;top:559px;" width="5" height="9" viewBox="0 0 5 9"><path d="M5 0L0 4.5L5 9Z" fill="#c2c3c9"/></svg>
<svg style="left:1039px;top:559px;" width="5" height="9" viewBox="0 0 5 9"><path d="M0 0L5 4.5L0 9Z" fill="#c2c3c9"/></svg>
<div class="a" style="left:31px;top:579px;width:1043px;height:30px;background:#8e9bbc;"></div>
<div class="a" style="left:32px;top:580px;width:1041px;height:21px;background:#4d6082;"></div>
<span class="t" style="left:35.8px;top:583.5px;height:16px;line-height:16px;font-size:13px;color:#fff;transform:scaleX(0.9748);">Список ошибок</span>
<svg style="left:1025px;top:587.7px;" width="8" height="4.5" viewBox="0 0 8 4.5"><path d="M0 0H8L4.0 4.5Z" fill="#e4e8f2"/></svg><svg style="left:1042px;top:584.5px;" width="7" height="12" viewBox="0 0 7 12"><path d="M1.4 0.6H5.4V6.4" fill="none" stroke="#e4e8f2" stroke-width="1"/><path d="M1.4 0.6V6.4" stroke="#e4e8f2" stroke-width="1"/><path d="M4.6 0.6V6.4" stroke="#e4e8f2" stroke-width="1.7"/><path d="M0 6.6H7" stroke="#e4e8f2" stroke-width="1.1"/><path d="M3.5 7V11" stroke="#e4e8f2" stroke-width="1.1"/></svg><svg style="left:1057px;top:585.9px;" width="10" height="9" viewBox="0 0 10 9"><path d="M0.6 0.6L9.2 8.2M9.2 0.6L0.6 8.2" stroke="#e4e8f2" stroke-width="1.3"/></svg>
<div class="a" style="left:32px;top:601px;width:1041px;height:7px;background:#cfd6e5;"></div>
<div class="a" style="left:39px;top:604px;width:149px;height:4.6px;background:#fff;border:1px solid #c5cce0;border-bottom:none;"></div>
<div class="a" style="left:194.5px;top:605px;width:1px;height:3px;background:#8591ab;"></div>
<div class="a" style="left:200px;top:603.4px;width:87px;height:5px;background:#fdf4bf;border:1px solid #e5c365;border-bottom:none;"></div>
<div class="a" style="left:211px;top:606.6px;width:4px;height:1.4px;background:#d8392b;"></div>
<div class="a" style="left:290.5px;top:605px;width:1px;height:3px;background:#8591ab;"></div>
<div class="a" style="left:295px;top:603.4px;width:136px;height:5px;background:#fdf4bf;border:1px solid #e5c365;border-bottom:none;"></div>
<div class="a" style="left:433.5px;top:605px;width:1px;height:3px;background:#8591ab;"></div>
<svg style="left:443.5px;top:605.6px;overflow:hidden;" width="10" height="2.4" viewBox="0 0 10 2.4"><ellipse cx="5" cy="3.4" rx="4.6" ry="3" fill="#fff"/><ellipse cx="5" cy="3.6" rx="3.6" ry="2.4" fill="#2f8fe0"/></svg>
<div class="a" style="left:305px;top:606.8px;width:2px;height:1.4px;background:#e8a800;"></div>
<div class="a" style="left:547px;top:605px;width:1px;height:3px;background:#8591ab;"></div>
<div class="a" style="left:552px;top:603.4px;width:22px;height:5px;background:#fdf4bf;border:1px solid #e5c365;border-bottom:none;"></div>
<div class="a" style="left:558px;top:606.4px;width:2px;height:1.6px;background:#a33;"></div>
<div class="a" style="left:563px;top:606.4px;width:2px;height:1.6px;background:#a33;"></div>
<div class="a" style="left:577px;top:605px;width:1px;height:3px;background:#8591ab;"></div>
<div class="a" style="left:585px;top:604px;width:150px;height:4.6px;background:#fff;border:1px solid #c5cce0;border-bottom:none;"></div>
<div class="a" style="left:874px;top:604px;width:198px;height:4.6px;background:#fff;border:1px solid #c5cce0;border-bottom:none;"></div>
<div class="a" style="left:1051px;top:607px;width:5px;height:1px;background:#777;"></div>
<div class="a" style="left:31px;top:615px;width:1043px;height:84px;background:#8e9bbc;"></div>
<div class="a" style="left:32px;top:616px;width:1041px;height:21px;background:#4d6082;"></div>
<span class="t" style="left:35.8px;top:619.5px;height:16px;line-height:16px;font-size:13px;color:#fff;transform:scaleX(0.8855);">Вывод</span>
<svg style="left:1025px;top:623.7px;" width="8" height="4.5" viewBox="0 0 8 4.5"><path d="M0 0H8L4.0 4.5Z" fill="#e4e8f2"/></svg><svg style="left:1042px;top:620.5px;" width="7" height="12" viewBox="0 0 7 12"><path d="M1.4 0.6H5.4V6.4" fill="none" stroke="#e4e8f2" stroke-width="1"/><path d="M1.4 0.6V6.4" stroke="#e4e8f2" stroke-width="1"/><path d="M4.6 0.6V6.4" stroke="#e4e8f2" stroke-width="1.7"/><path d="M0 6.6H7" stroke="#e4e8f2" stroke-width="1.1"/><path d="M3.5 7V11" stroke="#e4e8f2" stroke-width="1.1"/></svg><svg style="left:1057px;top:621.9px;" width="10" height="9" viewBox="0 0 10 9"><path d="M0.6 0.6L9.2 8.2M9.2 0.6L0.6 8.2" stroke="#e4e8f2" stroke-width="1.3"/></svg>
<div class="a" style="left:32px;top:637px;width:1041px;height:26px;background:#cfd6e5;"></div>
<span class="t" style="left:39px;top:643px;height:16px;line-height:16px;font-size:13px;color:#111;transform:scaleX(0.8914);"><u>П</u>оказать выходные данные из:</span>
<div class="a" style="left:215px;top:641px;width:300px;height:19px;background:#fdfdfd;border:1px solid #e3e7f1;"></div>
<span class="t" style="left:219px;top:642.5px;height:16px;line-height:16px;font-size:13px;color:#111;transform:scaleX(0.9671);">сборки</span>
<svg style="left:504px;top:649.5px;" width="7" height="4.0" viewBox="0 0 7 4.0"><path d="M0 0H7L3.5 4.0Z" fill="#1e1e1e"/></svg>
<div class="a" style="left:521px;top:641px;width:1px;height:19px;background:#8591ab;"></div>
<svg style="left:530px;top:642px;" width="15" height="16" viewBox="0 0 15 16"><path d="M3.6 6.6C3.6 3 4.4 1.6 6.4 1.6C8 1.6 8.6 2.6 8.6 4" fill="none" stroke="#a9adb6" stroke-width="1.5"/><path d="M1 5.4H6.2L3.6 8.4Z" fill="#a9adb6"/><path d="M6 8.4H14" stroke="#a9adb6" stroke-width="1.1"/><rect x="3.4" y="10.6" width="5.4" height="2.4" fill="#a9adb6"/><path d="M3.4 14.6H13" stroke="#a9adb6" stroke-width="1.1"/></svg>
<div class="a" style="left:551px;top:641px;width:1px;height:19px;background:#8591ab;"></div>
<svg style="left:561px;top:643px;" width="13" height="14" viewBox="0 0 13 14"><path d="M3.6 3.6H7.6" stroke="#a9adb6" stroke-width="1.6"/><path d="M4.2 0.6V6.6L0.4 3.6Z" fill="#a9adb6"/><path d="M6.6 7.2H12.4M2 9.4H12.4M2 11.8H12.4" stroke="#a9adb6" stroke-width="1.2"/></svg>
<svg style="left:583px;top:643px;" width="13" height="14" viewBox="0 0 13 14"><path d="M0.8 3.6H5" stroke="#a9adb6" stroke-width="1.6"/><path d="M4.2 0.6V6.6L8 3.6Z" fill="#a9adb6"/><path d="M8 7.2H12.4M2 9.4H12.4M2 11.8H12.4" stroke="#a9adb6" stroke-width="1.2"/></svg>
<div class="a" style="left:603px;top:641px;width:1px;height:19px;background:#8591ab;"></div>
<svg style="left:612px;top:642px;" width="15" height="16" viewBox="0 0 15 16"><path d="M9 1.9H14.2M9 5.4H14.2" stroke="#1e1e1e" stroke-width="1.3"/><path d="M1.4 9.4H14.2M1.4 11.8H14.2M1.4 14.1H14.2" stroke="#1e1e1e" stroke-width="1.4"/><path d="M1.4 1.2L8.4 8.2M8.4 1.2L1.4 8.2" stroke="#a1260d" stroke-width="1.6"/></svg>
<div class="a" style="left:633px;top:641px;width:1px;height:19px;background:#8591ab;"></div>
<svg style="left:641px;top:644px;" width="16" height="13" viewBox="0 0 16 13"><text x="0.4" y="5.2" font-family="Liberation Sans" font-size="7.6" font-weight="bold" fill="#1e1e1e" letter-spacing="-0.3">ab</text><text x="0.4" y="11" font-family="Liberation Sans" font-size="7.6" font-weight="bold" fill="#1e1e1e">c</text><path d="M9.6 2.8H14.4V8.4H7.4" fill="none" stroke="#1e1e1e" stroke-width="1.5"/><path d="M9.8 5.2V11.6L5.6 8.4Z" fill="#1e1e1e"/></svg>
<div class="a" style="left:32px;top:663px;width:1041px;height:35px;background:#e6e7e8;"></div>
<div class="a" style="left:32px;top:681px;width:1041px;height:17px;background:#e8e8ec;"></div>
<div class="a" style="left:1056px;top:663px;width:17px;height:18px;background:#e8e8ec;"></div>
<div class="a" style="left:143px;top:663px;width:1px;height:1px;background:#555;"></div>
<div class="a" style="left:179px;top:663px;width:1px;height:1px;background:#555;"></div>
<div class="a" style="left:250px;top:663px;width:1px;height:1px;background:#555;"></div>
<div class="a" style="left:387px;top:663px;width:2px;height:1px;background:#555;"></div>
<div class="a" style="left:480px;top:663px;width:2px;height:1px;background:#555;"></div>
<div class="a" style="left:498px;top:663px;width:1px;height:1px;background:#555;"></div>
<div class="a" style="left:520px;top:663px;width:2px;height:1px;background:#555;"></div>
<div class="a" style="left:533px;top:663px;width:1px;height:1px;background:#555;"></div>
<svg style="left:38px;top:684.5px;" width="5" height="9" viewBox="0 0 5 9"><path d="M5 0L0 4.5L5 9Z" fill="#868999"/></svg>
<div class="a" style="left:49px;top:685px;width:849px;height:9px;background:#c2c3c9;"></div>
<svg style="left:1045px;top:684.5px;" width="5" height="9" viewBox="0 0 5 9"><path d="M0 0L5 4.5L0 9Z" fill="#868999"/></svg>
<svg style="left:1061.5px;top:669px;" width="6" height="3" viewBox="0 0 6 3"><path d="M0 3L3 0L6 3Z" fill="#868999"/></svg>
<svg style="left:1060.5px;top:678px;" width="8" height="4" viewBox="0 0 8 4"><path d="M0 0H8L4 3.6Z" fill="#868999"/></svg>
<div class="a" style="left:1080px;top:85px;width:280px;height:293px;background:#8e9bbc;"></div>
<div class="a" style="left:1081px;top:86px;width:278px;height:21px;background:#fff29d;"></div>
<span class="t" style="left:1084.8px;top:89px;height:16px;line-height:16px;font-size:13px;color:#000;transform:scaleX(0.9077);">Обозреватель решений</span>
<svg style="left:1311px;top:93.7px;" width="8" height="4.5" viewBox="0 0 8 4.5"><path d="M0 0H8L4.0 4.5Z" fill="#6b5e23"/></svg><svg style="left:1328px;top:90.5px;" width="7" height="12" viewBox="0 0 7 12"><path d="M1.4 0.6H5.4V6.4" fill="none" stroke="#6b5e23" stroke-width="1"/><path d="M1.4 0.6V6.4" stroke="#6b5e23" stroke-width="1"/><path d="M4.6 0.6V6.4" stroke="#6b5e23" stroke-width="1.7"/><path d="M0 6.6H7" stroke="#6b5e23" stroke-width="1.1"/><path d="M3.5 7V11" stroke="#6b5e23" stroke-width="1.1"/></svg><svg style="left:1343px;top:91.9px;" width="10" height="9" viewBox="0 0 10 9"><path d="M0.6 0.6L9.2 8.2M9.2 0.6L0.6 8.2" stroke="#6b5e23" stroke-width="1.3"/></svg>
<div class="a" style="left:1081px;top:107px;width:278px;height:29px;background:#cfd6e5;"></div>
<div class="a" style="left:1349px;top:107px;width:10px;height:29px;background:#dde1ee;"></div>
<svg style="left:1351px;top:110px;" width="8" height="4" viewBox="0 0 8 4"><path d="M0.4 0V4L2.4 2Z M4.4 0V4L6.4 2Z" fill="#1e1e1e"/></svg>
<svg style="left:1089px;top:114px;" width="14" height="14" viewBox="0 0 14 14"><circle cx="7" cy="7" r="6.4" fill="#b1b4bb"/><path d="M11 7H4.2M7 3.8L3.8 7L7 10.2" fill="none" stroke="#d4d8e2" stroke-width="1.8"/></svg>
<svg style="left:1111px;top:114px;" width="14" height="14" viewBox="0 0 14 14"><circle cx="7" cy="7" r="6.4" fill="#b1b4bb"/><path d="M3 7H9.8M7 3.8L10.2 7L7 10.2" fill="none" stroke="#d4d8e2" stroke-width="1.8"/></svg>
<svg style="left:1132px;top:113px;" width="16" height="15" viewBox="0 0 16 15"><path d="M1 8L8 1.4L15 8" fill="none" stroke="#2d2d2d" stroke-width="1.5"/><path d="M3 7.4V14.2H13V7.4" fill="none" stroke="#2d2d2d" stroke-width="1.3"/><rect x="6.4" y="9.2" width="3.2" height="5" fill="#2d2d2d"/><path d="M11.6 1.2V4.6" stroke="#2d2d2d" stroke-width="1.3"/></svg>
<div class="a" style="left:1154px;top:111px;width:1px;height:20px;background:#8591ab;"></div>
<svg style="left:1162px;top:113px;" width="16" height="16" viewBox="0 0 16 16"><circle cx="8" cy="8" r="7.2" fill="#1a1a1a"/><circle cx="8.6" cy="8" r="5.4" fill="none" stroke="#cfd6e5" stroke-width="0.5" opacity="0.6"/><g stroke="#cfd6e5" stroke-width="0.55" opacity="0.85"><path d="M6.2 4V12M7.8 3.4V12.6M9.4 3.4V12.6M11 4V12M4.8 5.4H12.4M4.4 7H12.8M4.4 8.6H12.8M4.8 10.2H12.4"/></g></svg>
<div class="a" style="left:1184px;top:111px;width:1px;height:20px;background:#8591ab;"></div>
<svg style="left:1194px;top:113px;" width="15" height="16" viewBox="0 0 15 16"><path d="M0.6 0.8H5L2.8 3.6Z" fill="#1e1e1e"/><path d="M2.8 3V5" stroke="#1e1e1e" stroke-width="1"/><circle cx="8.6" cy="9.6" r="4.8" fill="#f0f2f8" stroke="#1e1e1e" stroke-width="1.2"/><path d="M8.6 6.6V9.8H11.2" fill="none" stroke="#1e1e1e" stroke-width="1.1"/></svg>
<svg style="left:1215px;top:120px;" width="6" height="3.5" viewBox="0 0 6 3.5"><path d="M0 0H6L3.0 3.5Z" fill="#1e1e1e"/></svg>
<svg style="left:1229px;top:114px;" width="13" height="14" viewBox="0 0 13 14"><path d="M2.6 3.6H12.2M5.4 0.6L2.2 3.6L5.4 6.6" fill="none" stroke="#2d2d2d" stroke-width="1.9"/><path d="M0.8 10.2H10.4M7.6 7.2L10.8 10.2L7.6 13.2" fill="none" stroke="#2d2d2d" stroke-width="1.9"/></svg>
<svg style="left:1250px;top:113px;" width="14" height="16" viewBox="0 0 14 16"><path d="M11.6 6.4A5.2 5.2 0 1 1 6.4 4" fill="none" stroke="#00539c" stroke-width="2.4"/><path d="M5.6 0.2L10.6 4L5.6 7.8Z" fill="#00539c"/></svg>
<svg style="left:1273px;top:114px;" width="13" height="13" viewBox="0 0 13 13"><path d="M4.4 2.4V0.8H12.4V6.8H10.8" fill="none" stroke="#2d2d2d" stroke-width="1"/><path d="M2.6 4.8V3H10.4V9H8.8" fill="none" stroke="#2d2d2d" stroke-width="1"/><rect x="0.6" y="5.4" width="7.8" height="6.4" fill="#eef0f6" stroke="#2d2d2d" stroke-width="1.1"/><path d="M2.6 8.6H6.2" stroke="#00539c" stroke-width="1.3"/></svg>
<svg style="left:1294px;top:113px;" width="15" height="16" viewBox="0 0 15 16"><path d="M4.4 2.4V0.8H1V10.6H3" fill="none" stroke="#1e1e1e" stroke-width="1"/><path d="M4.4 2.4H10L12.4 4.8V13.4" fill="none" stroke="#1e1e1e" stroke-width="1"/><path d="M3.4 4.6H8.8L11.2 7V15H3.4Z" fill="#f0f2f8" stroke="#1e1e1e" stroke-width="1.1"/><path d="M5 8.4H9.6M5 10.4H9.6M5 12.4H9.6" stroke="#1e1e1e" stroke-width="0.9"/></svg>
<div class="a" style="left:1315px;top:111px;width:1px;height:20px;background:#8591ab;"></div>
<svg style="left:1325px;top:116px;" width="13" height="10" viewBox="0 0 13 10"><path d="M4.6 0.8L1 5L4.6 9.2M8.4 0.8L12 5L8.4 9.2" fill="none" stroke="#1e1e1e" stroke-width="1.6"/></svg>
<div class="a" style="left:1081px;top:136px;width:278px;height:21px;background:#cfd6e5;"></div>
<div class="a" style="left:1082px;top:136px;width:276px;height:19px;background:#fdfdfd;"></div>
<span class="t" style="left:1085.7px;top:138px;height:16px;line-height:16px;font-size:13px;color:#6d6d6d;transform:scaleX(0.9261);">Обозреватель решений — поиск (Ctrl+ж)</span>
<svg style="left:1331px;top:139px;" width="14" height="14" viewBox="0 0 14 14"><circle cx="8.6" cy="5" r="3.3" fill="none" stroke="#555" stroke-width="1.9"/><path d="M6.2 7.6L1.4 12.4" stroke="#555" stroke-width="2.4" stroke-linecap="round"/></svg>
<svg style="left:1349px;top:145px;" width="6" height="3.5" viewBox="0 0 6 3.5"><path d="M0 0H6L3.0 3.5Z" fill="#717171"/></svg>
<div class="a" style="left:1081px;top:157px;width:278px;height:220px;background:#fff;"></div>
<div class="a" style="left:1081px;top:250px;width:278px;height:19px;background:#3399ff;"></div>
<svg style="left:1094px;top:163px;" width="15" height="15" viewBox="0 0 15 15"><path d="M0.9 4V0.6H13.6V10.9H10.2" fill="none" stroke="#424242" stroke-width="1"/><path d="M0.4 0.1H14.1V2.9H0.4Z" fill="#424242"/><path fill="#68217a" d="M7.3 5.4L9.2 6.2V13L7.3 13.8L3.4 10.4L1.6 11.8L0.6 11.4V7.8L1.6 7.4L3.4 8.8ZM7.3 7.8L5 9.6L7.3 11.4ZM1.7 8.8V10.4L2.6 9.6Z"/></svg>
<span class="t" style="left:1113.5px;top:162px;height:16px;line-height:16px;font-size:13px;color:#111;transform:scaleX(0.9203);">Решение "Hello"&nbsp; (проектов: 2)</span>
<svg style="left:1091.6px;top:184.4px;" width="7" height="7" viewBox="0 0 7 7"><path d="M6.8 0V6.8H0Z" fill="#1e1e1e"/></svg>
<svg style="left:1112px;top:182px;" width="14" height="12" viewBox="0 0 14 12"><rect x="0.5" y="0.5" width="13" height="11" fill="#fff" stroke="#388a34" stroke-width="1"/><path d="M6.2 3.9C5.2 2.6 2.6 3.2 2.6 6C2.6 8.8 5.2 9.4 6.2 8.1" fill="none" stroke="#424242" stroke-width="1.25"/><path d="M8.6 3V9.2M10.6 3V9.2M7.4 4.9H11.8M7.4 7.3H11.8" stroke="#424242" stroke-width="0.95"/></svg>
<span class="t b" style="left:1131.5px;top:180px;height:16px;line-height:16px;font-size:13px;color:#000;transform:scaleX(0.8710);">ConsoleApplicationHello</span>
<svg style="left:1110px;top:201px;" width="6" height="10" viewBox="0 0 6 10"><path d="M0.6 0.8L5.2 5L0.6 9.2Z" fill="none" stroke="#1e1e1e" stroke-width="1"/></svg>
<svg style="left:1129px;top:199px;" width="15" height="15" viewBox="0 0 15 15"><path d="M10.8 0.6C7.6 -0.2 5.2 2.8 6.4 5.4L0.6 11.2C-0.4 12.6 1.8 14.8 3.2 13.8L9 8C11.8 9.2 14.8 6.6 13.8 3.4L11.2 6L8.6 5.4L8.2 3Z" fill="#424242"/></svg>
<span class="t" style="left:1150px;top:198px;height:16px;line-height:16px;font-size:13px;color:#111;transform:scaleX(0.8945);">Properties</span>
<svg style="left:1110px;top:219px;" width="6" height="10" viewBox="0 0 6 10"><path d="M0.6 0.8L5.2 5L0.6 9.2Z" fill="none" stroke="#1e1e1e" stroke-width="1"/></svg>
<svg style="left:1130px;top:220px;" width="14" height="8" viewBox="0 0 14 8"><rect x="0" y="1.6" width="3.6" height="4" fill="#424242"/><rect x="4.6" y="3" width="1.6" height="1.2" fill="#424242"/><rect x="7.6" y="0.3" width="6.4" height="6.6" fill="#424242"/></svg>
<span class="t" style="left:1150px;top:216px;height:16px;line-height:16px;font-size:13px;color:#111;transform:scaleX(0.9392);">Ссылки</span>
<svg style="left:1130px;top:234.6px;" width="15" height="15" viewBox="0 0 15 15"><path d="M5.6 2.4V0.8H11L13.8 3.6V12.6H5.6V11" fill="#fff" stroke="#424242" stroke-width="1.1"/><path d="M10.6 0.8V4H13.8" fill="none" stroke="#424242" stroke-width="1"/><path d="M5.2 2.6C3 2 1 3.8 1.8 6L0.4 8.4V9.4H2.6V13.8H4.2V9.4L5.6 8C7 7.4 7 4.6 6 3.8L4.6 5.6L3.4 5.2L3.2 4Z" fill="#424242"/></svg>
<span class="t" style="left:1150px;top:234px;height:16px;line-height:16px;font-size:13px;color:#111;transform:scaleX(0.9522);">App.config</span>
<svg style="left:1110px;top:255px;" width="6" height="10" viewBox="0 0 6 10"><path d="M0.6 0.8L5.2 5L0.6 9.2Z" fill="none" stroke="#fff" stroke-width="1"/></svg>
<svg style="left:1130px;top:254px;" width="15" height="11" viewBox="0 0 15 11"><path d="M6.4 3.4C5.6 1.6 1.8 1.8 1.8 5.4C1.8 9 5.6 9.2 6.4 7.4" fill="none" stroke="#fff" stroke-width="3.6"/><path d="M9.4 1.6V7M11.8 1.6V7M8 3.2H13.4M8 5.4H13.4" stroke="#fff" stroke-width="2.8" stroke-linecap="square"/><path d="M6.4 3.4C5.6 1.6 1.8 1.8 1.8 5.4C1.8 9 5.6 9.2 6.4 7.4" fill="none" stroke="#388a34" stroke-width="2"/><path d="M9.4 1.6V7M11.8 1.6V7M8 3.2H13.4M8 5.4H13.4" stroke="#388a34" stroke-width="1.3"/></svg>
<span class="t" style="left:1150px;top:252px;height:16px;line-height:16px;font-size:13px;color:#fff;transform:scaleX(0.9027);">Program.cs</span>
<svg style="left:1092px;top:273px;" width="6" height="10" viewBox="0 0 6 10"><path d="M0.6 0.8L5.2 5L0.6 9.2Z" fill="none" stroke="#1e1e1e" stroke-width="1"/></svg>
<svg style="left:1112px;top:272px;" width="14" height="12" viewBox="0 0 14 12"><rect x="0.5" y="0.5" width="13" height="11" fill="#fff" stroke="#388a34" stroke-width="1"/><path d="M6.2 3.9C5.2 2.6 2.6 3.2 2.6 6C2.6 8.8 5.2 9.4 6.2 8.1" fill="none" stroke="#424242" stroke-width="1.25"/><path d="M8.6 3V9.2M10.6 3V9.2M7.4 4.9H11.8M7.4 7.3H11.8" stroke="#424242" stroke-width="0.95"/></svg>
<span class="t" style="left:1131.5px;top:270px;height:16px;line-height:16px;font-size:13px;color:#111;transform:scaleX(0.9228);">WindowsFormsHello</span>
<div class="a" style="left:1080px;top:384px;width:280px;height:315px;background:#8e9bbc;"></div>
<div class="a" style="left:1081px;top:385px;width:278px;height:21px;background:#4d6082;"></div>
<span class="t" style="left:1084.8px;top:388px;height:16px;line-height:16px;font-size:13px;color:#fff;transform:scaleX(0.8747);">Свойства</span>
<svg style="left:1311px;top:392.7px;" width="8" height="4.5" viewBox="0 0 8 4.5"><path d="M0 0H8L4.0 4.5Z" fill="#e4e8f2"/></svg><svg style="left:1328px;top:389.5px;" width="7" height="12" viewBox="0 0 7 12"><path d="M1.4 0.6H5.4V6.4" fill="none" stroke="#e4e8f2" stroke-width="1"/><path d="M1.4 0.6V6.4" stroke="#e4e8f2" stroke-width="1"/><path d="M4.6 0.6V6.4" stroke="#e4e8f2" stroke-width="1.7"/><path d="M0 6.6H7" stroke="#e4e8f2" stroke-width="1.1"/><path d="M3.5 7V11" stroke="#e4e8f2" stroke-width="1.1"/></svg><svg style="left:1343px;top:390.9px;" width="10" height="9" viewBox="0 0 10 9"><path d="M0.6 0.6L9.2 8.2M9.2 0.6L0.6 8.2" stroke="#e4e8f2" stroke-width="1.3"/></svg>
<div class="a" style="left:1081px;top:406px;width:278px;height:292px;background:#fff;"></div>
<span class="t b" style="left:1087px;top:410.5px;height:16px;line-height:16px;font-size:13px;color:#000;transform:scaleX(0.8666);">Program.cs</span>
<span class="t" style="left:1155.5px;top:410.5px;height:16px;line-height:16px;font-size:13px;color:#000;transform:scaleX(0.8713);">Свойства файла</span>
<svg style="left:1350px;top:417.5px;" width="5" height="3.0" viewBox="0 0 5 3.0"><path d="M0 0H5L2.5 3.0Z" fill="#1e1e1e"/></svg>
<div class="a" style="left:1082px;top:431px;width:276px;height:25px;background:#cfd6e5;"></div>
<svg style="left:1087px;top:435px;" width="16" height="15" viewBox="0 0 16 15"><g fill="#1e1e1e"><rect x="0.6" y="1" width="5.4" height="5.4"/><rect x="0.6" y="8.6" width="5.4" height="5.4"/></g><g fill="#cfd6e5"><rect x="2.2" y="3.2" width="2.2" height="1"/><rect x="2.8" y="2.6" width="1" height="2.2"/><rect x="2.2" y="10.8" width="2.2" height="1"/></g><path d="M7.4 1.6H12.6M7.4 3.8H12.6M7.4 6H12.6M7.4 10H12.6M7.4 12.6H12.6" stroke="#1e1e1e" stroke-width="1"/><path d="M14 1.6H15M14 3.8H15M14 6H15M14 13H15" stroke="#1e1e1e" stroke-width="1"/></svg>
<div class="a" style="left:1107px;top:432px;width:23px;height:22px;background:#fdf4bf;border:1px solid #e5c365;"></div>
<svg style="left:1110px;top:435px;" width="17" height="16" viewBox="0 0 17 16"><rect x="0.6" y="0.4" width="6.6" height="6.6" fill="#424242"/><rect x="0.6" y="8.4" width="6.6" height="6.6" fill="#424242"/><text x="1.6" y="6.2" font-family="Liberation Sans" font-size="6.4" font-weight="bold" fill="#fdf4bf">A</text><text x="1.8" y="14.2" font-family="Liberation Sans" font-size="6.4" font-weight="bold" fill="#fdf4bf">Z</text><path d="M11.6 3V12" stroke="#0046c0" stroke-width="2"/><path d="M8.4 8.4L11.6 12.2L14.8 8.4" fill="none" stroke="#0046c0" stroke-width="2"/></svg>
<div class="a" style="left:1133px;top:434px;width:1px;height:20px;background:#8591ab;"></div>
<svg style="left:1141px;top:436px;" width="13" height="13" viewBox="0 0 13 13"><path d="M9.6 0.4C6.8 -0.2 4.6 2.4 5.6 4.8L0.6 9.8C-0.4 11 1.6 13 2.8 12L7.8 7C10.2 8 13 5.8 12.2 3L9.8 5.4L7.6 4.8L7.2 2.6Z" fill="#a2a4a5"/></svg>
<div class="a" style="left:1082px;top:457px;width:14px;height:114px;background:#eeeef2;"></div>
<div class="a" style="left:1096px;top:457px;width:120px;height:19px;background:#eeeef2;"></div>
<div class="a" style="left:1096px;top:457px;width:118.6px;height:19px;overflow:hidden"><span class="t" style="left:4px;top:2px;height:16px;line-height:16px;font-size:13px;color:#000;transform:scaleX(0.9235);">Действие при сборке</span></div>
<div class="a" style="left:1217px;top:457px;width:141px;height:19px;overflow:hidden"><span class="t" style="left:3px;top:2px;height:16px;line-height:16px;font-size:13px;color:#000;transform:scaleX(0.9287);">Компилировать</span></div>
<div class="a" style="left:1096px;top:476px;width:262px;height:1px;background:#eeeef2;"></div>
<div class="a" style="left:1096px;top:476px;width:118.6px;height:19px;overflow:hidden"><span class="t" style="left:4px;top:2px;height:16px;line-height:16px;font-size:13px;color:#000;transform:scaleX(0.8921);">Имя файла</span></div>
<div class="a" style="left:1217px;top:476px;width:141px;height:19px;overflow:hidden"><span class="t" style="left:3px;top:2px;height:16px;line-height:16px;font-size:13px;color:#000;transform:scaleX(0.9027);">Program.cs</span></div>
<div class="a" style="left:1096px;top:495px;width:262px;height:1px;background:#eeeef2;"></div>
<div class="a" style="left:1096px;top:495px;width:118.6px;height:19px;overflow:hidden"><span class="t" style="left:4px;top:2px;height:16px;line-height:16px;font-size:13px;color:#000;transform:scaleX(0.9087);">Копировать в выходн</span></div>
<div class="a" style="left:1217px;top:495px;width:141px;height:19px;overflow:hidden"><span class="t" style="left:3px;top:2px;height:16px;line-height:16px;font-size:13px;color:#000;transform:scaleX(0.9180);">Не копировать</span></div>
<div class="a" style="left:1096px;top:514px;width:262px;height:1px;background:#eeeef2;"></div>
<div class="a" style="left:1096px;top:514px;width:118.6px;height:19px;overflow:hidden"><span class="t" style="left:4px;top:2px;height:16px;line-height:16px;font-size:13px;color:#7a7a7a;transform:scaleX(0.9315);">Полный путь</span></div>
<div class="a" style="left:1217px;top:514px;width:141px;height:19px;overflow:hidden"><span class="t" style="left:3px;top:2px;height:16px;line-height:16px;font-size:13px;color:#7a7a7a;transform:scaleX(0.9248);">E:\Уроки программирован</span></div>
<div class="a" style="left:1096px;top:533px;width:262px;height:1px;background:#eeeef2;"></div>
<div class="a" style="left:1096px;top:533px;width:118.6px;height:19px;overflow:hidden"><span class="t" style="left:4px;top:2px;height:16px;line-height:16px;font-size:13px;color:#000;transform:scaleX(0.9152);">Пользовательский ин</span></div>
<div class="a" style="left:1096px;top:552px;width:262px;height:1px;background:#eeeef2;"></div>
<div class="a" style="left:1096px;top:552px;width:118.6px;height:19px;overflow:hidden"><span class="t" style="left:4px;top:2px;height:16px;line-height:16px;font-size:13px;color:#000;transform:scaleX(0.9431);">Пространство имен п</span></div>
<div class="a" style="left:1096px;top:571px;width:262px;height:1px;background:#eeeef2;"></div>
<div class="a" style="left:1216px;top:457px;width:1px;height:114px;background:#eeeef2;"></div>
<div class="a" style="left:1082px;top:635px;width:276px;height:1px;background:#eeeef2;"></div>
<span class="t b" style="left:1087.5px;top:642px;height:16px;line-height:16px;font-size:13px;color:#000;transform:scaleX(0.9148);">Действие при сборке</span>
<span class="t" style="left:1087.5px;top:660.5px;height:16px;line-height:16px;font-size:13px;color:#000;transform:scaleX(0.9182);">Настройка отношения файла к процессам</span>
<span class="t" style="left:1087.5px;top:675.5px;height:16px;line-height:16px;font-size:13px;color:#000;transform:scaleX(0.9091);">сборки и внедрения.</span>
<div class="a" style="left:0px;top:705px;width:1366px;height:23px;background:#007acc;"></div>
<span class="t" style="left:4px;top:708.5px;height:16px;line-height:16px;font-size:13px;color:#fff;transform:scaleX(0.9136);">Готово</span>
<svg style="left:1240px;top:711.4px;" width="9" height="12" viewBox="0 0 9 12"><path d="M4.5 1V11.4" stroke="#f0e8de" stroke-width="1.8"/><path d="M0.8 5.4L4.5 1.4L8.2 5.4" fill="none" stroke="#f0e8de" stroke-width="1.8"/></svg>
<span class="t" style="left:1258px;top:708.5px;height:16px;line-height:16px;font-size:13px;color:#fff;transform:scaleX(0.9215);">Опубликовать</span>
<svg style="left:1343px;top:714px;" width="8" height="5" viewBox="0 0 8 5"><path d="M0 4.6L4 0L8 4.6Z" fill="#fff"/></svg>
<div class="a" style="left:0px;top:728px;width:1366px;height:8px;background:#0b1013;"></div>
<div class="a" style="left:1362px;top:728px;width:1px;height:8px;background:#5a5e60;"></div>
<div class="a" style="left:637px;top:728px;width:45px;height:8px;background:#454849;"></div>
<div class="a" style="left:682px;top:728px;width:3px;height:8px;background:#2d3133;"></div>
<span class="t" style="left:1266px;top:730px;height:16px;line-height:16px;font-size:11px;color:#fff;transform:scaleX(1.0170);">16:22</span>
</div>
</body></html>
